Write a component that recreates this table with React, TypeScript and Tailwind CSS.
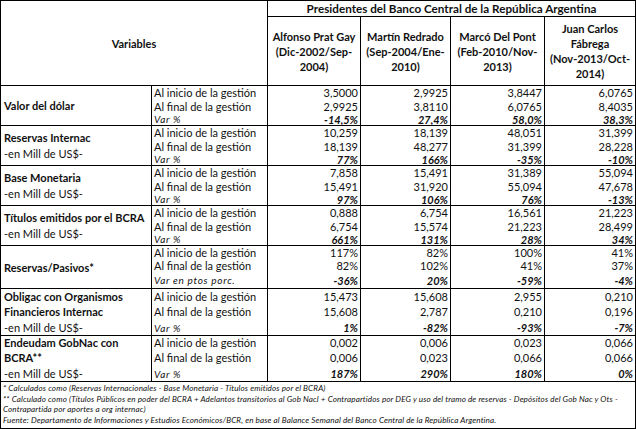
const presidents = [
  ["Alfonso Prat Gay", "(Dic-2002/Sep-", "2004)"],
  ["Martín Redrado", "(Sep-2004/Ene-", "2010)"],
  ["Marcó Del Pont", "(Feb-2010/Nov-", "2013)"],
  ["Juan Carlos", "Fábrega", "(Nov-2013/Oct-", "2014)"],
];

type Section = {
  title: string[];
  sub?: string;
  varLabel: string;
  rows: number[];
  height: string;
  values: string[][];
};

const sections: Section[] = [
  {
    title: ["Valor del dólar"],
    varLabel: "Var %",
    rows: [13, 14, 12],
    height: "h-[40px]",
    values: [
      ["3,5000", "2,9925", "-14,5%"],
      ["2,9925", "3,8110", "27,4%"],
      ["3,8447", "6,0765", "58,0%"],
      ["6,0765", "8,4035", "38,3%"],
    ],
  },
  {
    title: ["Reservas Internac"],
    sub: "-en Mill de US$-",
    varLabel: "Var %",
    rows: [13, 14, 12],
    height: "h-[40px]",
    values: [
      ["10,259", "18,139", "77%"],
      ["18,139", "48,277", "166%"],
      ["48,051", "31,399", "-35%"],
      ["31,399", "28,228", "-10%"],
    ],
  },
  {
    title: ["Base Monetaria"],
    sub: "-en Mill de US$-",
    varLabel: "Var %",
    rows: [13, 14, 12],
    height: "h-[40px]",
    values: [
      ["7,858", "15,491", "97%"],
      ["15,491", "31,920", "106%"],
      ["31,389", "55,094", "76%"],
      ["55,094", "47,678", "-13%"],
    ],
  },
  {
    title: ["Títulos emitidos por el BCRA"],
    sub: "-en Mill de US$-",
    varLabel: "Var %",
    rows: [13, 14, 12],
    height: "h-[40px]",
    values: [
      ["0,888", "6,754", "661%"],
      ["6,754", "15,574", "131%"],
      ["16,561", "21,223", "28%"],
      ["21,223", "28,499", "34%"],
    ],
  },
  {
    title: ["Reservas/Pasivos*"],
    varLabel: "Var en ptos porc.",
    rows: [13, 13, 16],
    height: "h-[43px]",
    values: [
      ["117%", "82%", "-36%"],
      ["82%", "102%", "20%"],
      ["100%", "41%", "-59%"],
      ["41%", "37%", "-4%"],
    ],
  },
  {
    title: ["Obligac con Organismos", "Financieros Internac"],
    sub: "-en Mill de US$-",
    varLabel: "Var %",
    rows: [14, 17, 15],
    height: "h-[47px]",
    values: [
      ["15,473", "15,608", "1%"],
      ["15,608", "2,787", "-82%"],
      ["2,955", "0,210", "-93%"],
      ["0,210", "0,196", "-7%"],
    ],
  },
  {
    title: ["Endeudam GobNac con", "BCRA**"],
    sub: "-en Mill de US$-",
    varLabel: "Var %",
    rows: [13, 17, 15],
    height: "h-[46px]",
    values: [
      ["0,002", "0,006", "187%"],
      ["0,006", "0,023", "290%"],
      ["0,023", "0,066", "180%"],
      ["0,066", "0,066", "0%"],
    ],
  },
];

function SectionRow({ s }: { s: Section }) {
  const labelLines = [...s.title.map((t) => ({ t, bold: true })), ...(s.sub ? [{ t: s.sub, bold: false }] : [])];
  const aligned = labelLines.length === 3;
  return (
    <>
      <div className={`${s.height} border-r border-b border-black pl-[3px] flex flex-col ${aligned ? "" : "justify-center"}`}>
        {labelLines.map((l, i) => (
          <div
            key={i}
            style={aligned ? { height: s.rows[i] } : undefined}
            className={`flex items-center whitespace-nowrap ${aligned ? "" : "h-[16px]"} ${l.bold ? "font-bold" : ""}`}
          >
            {l.t}
          </div>
        ))}
      </div>
      <div className={`${s.height} border-r border-b border-black pl-[2px] flex flex-col`}>
        <div style={{ height: s.rows[0] }} className="flex items-center whitespace-nowrap">Al inicio de la gestión</div>
        <div style={{ height: s.rows[1] }} className="flex items-center whitespace-nowrap">Al final de la gestión</div>
        <div style={{ height: s.rows[2] }} className="flex items-center whitespace-nowrap italic text-[10px] tracking-[0.7px]">
          {s.varLabel}
        </div>
      </div>
      {s.values.map((col, ci) => (
        <div
          key={ci}
          className={`${s.height} border-b border-black pr-[2px] flex flex-col items-end ${ci < 3 ? "border-r" : ""}`}
        >
          {col.map((v, vi) => (
            <div
              key={vi}
              style={{ height: s.rows[vi] }}
              className={`flex items-center whitespace-nowrap ${vi === 2 ? "font-bold italic" : ""}`}
            >
              {v}
            </div>
          ))}
        </div>
      ))}
    </>
  );
}

export default function App() {
  return (
    <div className="w-[636px] h-[429px] bg-white border border-black font-['Lato','Liberation_Sans',sans-serif] text-[11px] text-[#111] leading-none">
      <div className="grid grid-cols-[151px_116px_93px_90px_94px_90px]">
        <div className="col-span-2 row-span-2 h-[85px] border-r border-b border-black flex items-center justify-center font-bold">
          Variables
        </div>
        <div className="col-span-4 h-[16px] border-b border-black flex items-center justify-center font-bold text-[11.7px]">
          Presidentes del Banco Central de la República Argentina
        </div>
        {presidents.map((p, i) => (
          <div
            key={i}
            className={`h-[69px] border-b border-black flex flex-col items-center justify-center font-bold ${i < 3 ? "border-r" : ""}`}
          >
            {p.map((line, li) => (
              <div key={li} className="h-[15px] flex items-center whitespace-nowrap">
                {line}
              </div>
            ))}
          </div>
        ))}
        {sections.map((s, i) => (
          <SectionRow key={i} s={s} />
        ))}
        <div className="col-span-6 h-[46px] pl-[2px] pt-[1px] italic text-[8.1px] leading-[10.5px] tracking-[0.12px]">
          <div>* Calculados como (Reservas Internacionales - Base Monetaria - Títulos emitidos por el BCRA)</div>
          <div>
            ** Calculado como (Títulos Públicos en poder del BCRA + Adelantos transitorios al Gob Nacl + Contrapartidos por DEG y uso del tramo de reservas - Depósitos del Gob Nac y Ots -
            <br />
            Contrapartida por aportes a org internac)
          </div>
          <div>Fuente: Departamento de Informaciones y Estudios Económicos/BCR, en base al Balance Semanal del Banco Central de la República Argentina.</div>
        </div>
      </div>
    </div>
  );
}
